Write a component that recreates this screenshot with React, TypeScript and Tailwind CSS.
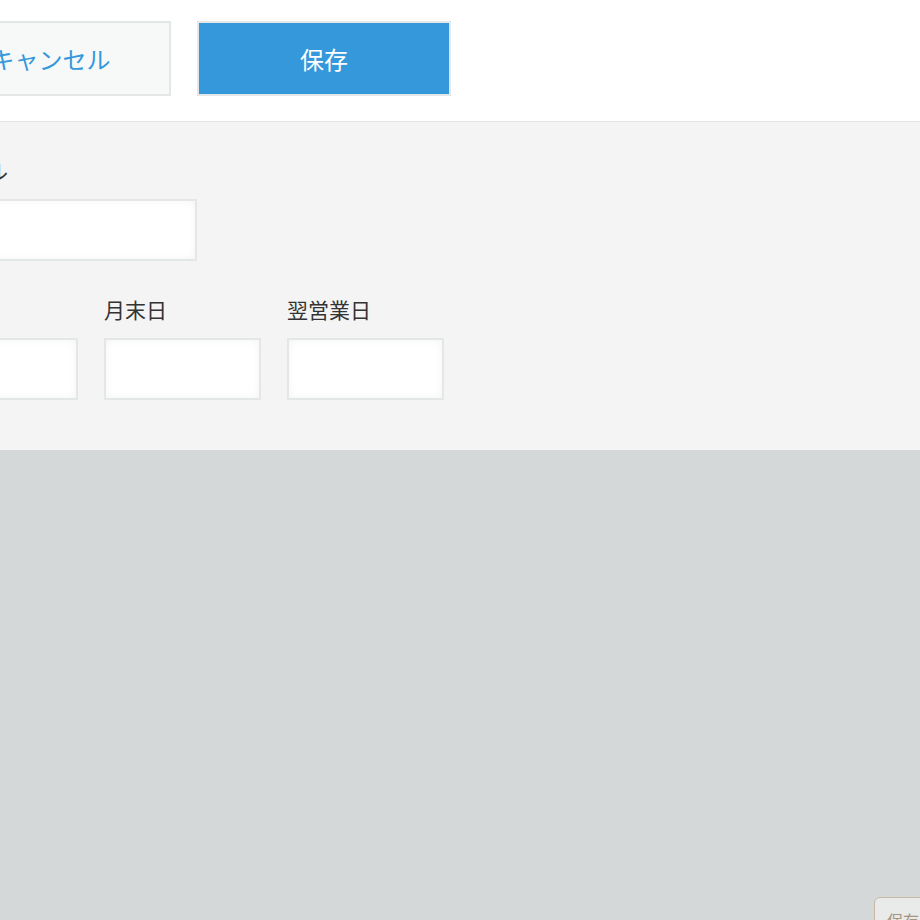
const font = { fontFamily: '"Noto Sans CJK JP", "Noto Sans", sans-serif' };

const fieldBox =
  "h-[62px] border-2 border-[#e3e7e8] bg-white shadow-[inset_0_0_8px_rgba(0,0,0,0.05)]";

const Field = ({ label, width, indent = "" }: { label: string; width: string; indent?: string }) => (
  <div className="flex flex-col">
    <div className={`h-[30px] whitespace-nowrap text-[21px] leading-[30px] text-[#333333] ${indent}`}>{label}</div>
    <div className={`mt-[14px] ${fieldBox} ${width}`} />
  </div>
);

export default function App() {
  return (
    <div className="relative h-[920px] w-[920px] overflow-hidden bg-[#d4d8d9]" style={font}>
      {/* toolbar */}
      <div className="h-[122px] overflow-hidden border-b border-[#e3e3e3] bg-white">
        <div className="-ml-[82px] flex gap-[26px] pt-[21px]">
          <button className="h-[75px] w-[253px] shrink-0 border-2 border-[#e3e7e8] bg-[#f7f9f9] pl-[12px] text-[24px] text-[#3498db]">
            キャンセル
          </button>
          <button className="h-[75px] w-[254px] shrink-0 border-2 border-[#e3e7e8] bg-[#3498db] text-[24px] text-white">
            保存
          </button>
        </div>
      </div>

      {/* form panel */}
      <div className="h-[328px] overflow-hidden bg-[#f4f4f4]">
        <div className="-ml-[79px] flex flex-col gap-[33px] pt-[33px]">
          <Field label="タイトル" width="w-[276px]" indent="pl-[3px]" />
          <div className="flex gap-[26px]">
            <Field label="締日" width="w-[157px]" />
            <Field label="月末日" width="w-[157px]" />
            <Field label="翌営業日" width="w-[157px]" />
          </div>
        </div>
      </div>

      {/* floating tab, bottom right */}
      <div className="absolute left-[874px] top-[897px] h-[40px] w-[80px] rounded-tl-[6px] border border-[#c9b8a5] bg-[#e9eaea] pl-[12px] pt-[12px] text-[16px] leading-[20px] text-[#a89580]">
        保存
      </div>
    </div>
  );
}
